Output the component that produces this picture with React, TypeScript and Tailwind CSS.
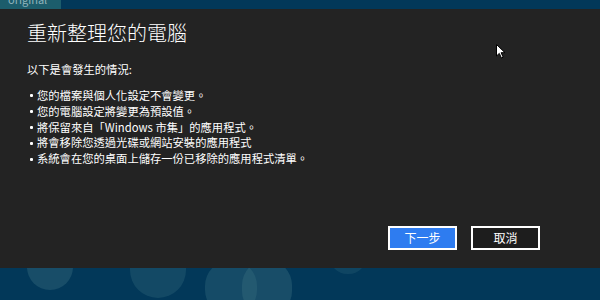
const font = { fontFamily: '"Noto Sans CJK TC", "Noto Sans", sans-serif' }

const items = [
  '您的檔案與個人化設定不會變更。',
  '您的電腦設定將變更為預設值。',
  '將保留來自「Windows 市集」的應用程式。',
  '將會移除您透過光碟或網站安裝的應用程式',
  '系統會在您的桌面上儲存一份已移除的應用程式清單。',
]

export default function App() {
  return (
    <div
      className="flex h-[300px] w-[600px] flex-col overflow-hidden bg-[#023859]"
      style={font}
    >
      {/* top strip */}
      <div className="flex h-[9px] shrink-0">
        <div className="relative h-full w-[61px] overflow-hidden bg-[#1c5d6c]">
          <span className="absolute -top-[6px] left-[8px] text-[11px] leading-none text-[#8fb3bb]">
            original
          </span>
        </div>
        <div className="flex-1 bg-[#023859]" />
      </div>

      {/* dialog */}
      <div className="relative flex h-[259px] shrink-0 flex-col bg-[#232323] px-[27px] pt-[10px] text-white">
        <h1 className="text-[20px] font-light leading-[28px]">重新整理您的電腦</h1>
        <p className="mt-[15px] text-[11.3px] leading-[14px]">以下是會發生的情況:</p>
        <ul className="mt-[12px] flex flex-col text-[11.3px] leading-[15.8px]">
          {items.map((t) => (
            <li key={t} className="flex items-center">
              <span className="ml-[3px] mr-[4px] inline-block h-[3px] w-[3px] rounded-[1px] bg-white" />
              <span>{t}</span>
            </li>
          ))}
        </ul>

        <div className="mt-auto mb-[18px] flex justify-end gap-[14px] pr-[33px]">
          <button className="h-[24px] w-[69px] border-2 border-white bg-[#2e7cf0] text-[12px] text-white">
            下一步
          </button>
          <button className="h-[24px] w-[69px] border-2 border-white bg-[#1d1d1d] text-[12px] text-white">
            取消
          </button>
        </div>

        {/* mouse pointer */}
        <svg className="absolute left-[496px] top-[35px]" width="10" height="15" viewBox="0 0 10 15">
          <path d="M0.5 0.5 L0.5 12 L3.3 9.4 L5.4 14 L7.2 13.2 L5.1 8.7 L9 8.7 Z" fill="white" stroke="black" strokeWidth="1" />
        </svg>
      </div>

      {/* bottom strip with bokeh */}
      <div className="relative flex-1 overflow-hidden bg-[#023859]">
        <div className="absolute -top-[24px] left-[27px] h-[46px] w-[46px] rounded-full bg-[#3a6d80]/40" />
        <div className="absolute -top-[30px] left-[130px] h-[60px] w-[56px] rounded-full bg-[#2d6478]/40" />
        <div className="absolute -top-[8px] left-[205px] h-[56px] w-[52px] rounded-full bg-[#2d6478]/45" />
        <div className="absolute -top-[8px] left-[242px] h-[56px] w-[50px] rounded-full bg-[#3a6d80]/40" />
        <div className="absolute -top-[28px] left-[330px] h-[34px] w-[36px] rounded-full bg-[#2d6478]/30" />
      </div>
    </div>
  )
}
